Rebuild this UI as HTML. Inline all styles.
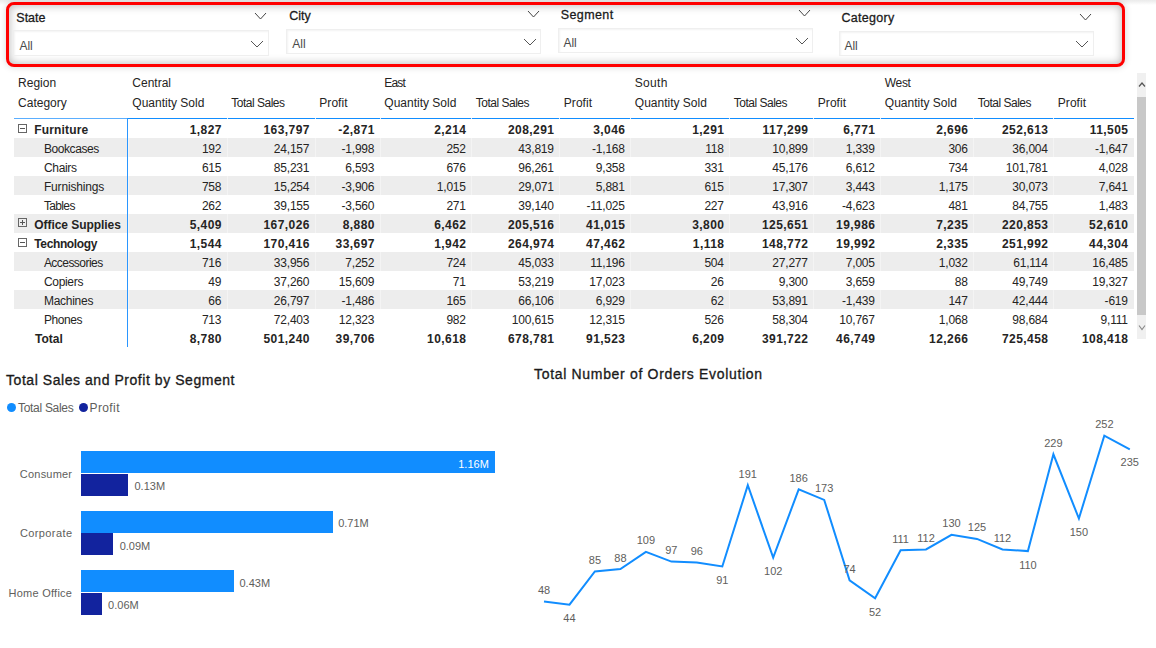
<!DOCTYPE html>
<html><head><meta charset="utf-8">
<style>
*{margin:0;padding:0;box-sizing:border-box}
html,body{width:1156px;height:648px;overflow:hidden;background:#fff}
body{position:relative;font-family:"Liberation Sans",sans-serif;color:#252423}
.abs{position:absolute}
.t{position:absolute;white-space:nowrap;line-height:1}
.topstrip{position:absolute;left:0;top:0;width:1156px;height:5px;background:linear-gradient(#ebebeb,#f2f2f2 40%,rgba(255,255,255,0))}
.slc{position:absolute;left:6px;top:2px;width:1119px;height:64.5px;border:3px solid #ff0000;border-radius:8px;
 box-shadow:0 0 7px rgba(0,0,0,0.17), inset 0 0 10px rgba(0,0,0,0.3);background:#fff}
.sh{font-size:12.5px;color:#1a1a1a;-webkit-text-stroke:0.28px #1a1a1a}
.box{position:absolute;border:1px solid #efefef;background:#fff;box-shadow:inset 1px 1px 2px rgba(0,0,0,0.05)}
.all{font-size:12px;color:#4a4a4a}
.row{position:absolute;left:14px;width:1120px;height:19px}
.g{background:#ededed}
.cell{position:absolute;top:1.5px;height:19px;font-size:12px;line-height:19px;text-align:right;padding-right:5.5px;white-space:nowrap}
.lab{position:absolute;top:1.5px;height:19px;font-size:12px;line-height:19px;white-space:nowrap}
.b{font-weight:bold}
.ttl{font-size:14px;color:#1a1a1a;letter-spacing:0.55px;-webkit-text-stroke:0.32px #1a1a1a}
.hd{position:absolute;font-size:12px;line-height:1;white-space:nowrap;color:#252423}
</style></head><body>
<div class="topstrip"></div>
<div class="slc"></div>

<div class="t sh" style="left:16.3px;top:11.700000000000001px;letter-spacing:0px">State</div>
<svg class="abs" style="left:254px;top:12px" width="13" height="8" viewBox="-1 -1 13 8"><polyline points="0,0 5.5,6 11,0" fill="none" stroke="#444" stroke-width="1.0"/></svg>
<div class="box" style="left:13.2px;top:30.2px;width:255.40000000000003px;height:25.400000000000002px"></div>
<div class="t all" style="left:19.400000000000002px;top:39.9px">All</div>
<svg class="abs" style="left:250px;top:40px" width="14" height="8" viewBox="-1 -1 14 8"><polyline points="0,0 6.0,6 12,0" fill="none" stroke="#555" stroke-width="1.0"/></svg>
<div class="t sh" style="left:289.3px;top:9.799999999999999px;letter-spacing:0px">City</div>
<svg class="abs" style="left:527px;top:10px" width="13" height="8" viewBox="-1 -1 13 8"><polyline points="0,0 5.5,6 11,0" fill="none" stroke="#444" stroke-width="1.0"/></svg>
<div class="box" style="left:286.3px;top:29.3px;width:254.90000000000003px;height:24.7px"></div>
<div class="t all" style="left:292.3px;top:38.0px">All</div>
<svg class="abs" style="left:523px;top:38px" width="14" height="8" viewBox="-1 -1 14 8"><polyline points="0,0 6.0,6 12,0" fill="none" stroke="#555" stroke-width="1.0"/></svg>
<div class="t sh" style="left:560.7px;top:8.9px;letter-spacing:0.4px">Segment</div>
<svg class="abs" style="left:798px;top:9px" width="13" height="8" viewBox="-1 -1 13 8"><polyline points="0,0 5.5,6 11,0" fill="none" stroke="#444" stroke-width="1.0"/></svg>
<div class="box" style="left:558.3px;top:27.6px;width:254.30000000000007px;height:25.0px"></div>
<div class="t all" style="left:563.4px;top:36.8px">All</div>
<svg class="abs" style="left:795px;top:37.2px" width="14" height="8" viewBox="-1 -1 14 8"><polyline points="0,0 6.0,6 12,0" fill="none" stroke="#555" stroke-width="1.0"/></svg>
<div class="t sh" style="left:841.5px;top:11.700000000000001px;letter-spacing:0.3px">Category</div>
<svg class="abs" style="left:1079px;top:12.5px" width="13" height="8" viewBox="-1 -1 13 8"><polyline points="0,0 5.5,6 11,0" fill="none" stroke="#444" stroke-width="1.0"/></svg>
<div class="box" style="left:838.5px;top:30.6px;width:255.5px;height:25.0px"></div>
<div class="t all" style="left:844.4px;top:39.8px">All</div>
<svg class="abs" style="left:1075px;top:39.7px" width="14" height="8" viewBox="-1 -1 14 8"><polyline points="0,0 6.0,6 12,0" fill="none" stroke="#555" stroke-width="1.0"/></svg>
<div class="hd" style="left:18.1px;top:76.8px;letter-spacing:0px">Region</div>
<div class="hd" style="left:18.1px;top:96.7px;letter-spacing:0px">Category</div>
<div class="hd" style="left:132.3px;top:76.8px;letter-spacing:0px">Central</div>
<div class="hd" style="left:132.3px;top:96.7px;letter-spacing:0px">Quantity Sold</div>
<div class="hd" style="left:231.3px;top:96.7px;letter-spacing:-0.5px">Total Sales</div>
<div class="hd" style="left:319.3px;top:96.7px;letter-spacing:0.05px">Profit</div>
<div class="hd" style="left:384.3px;top:76.8px;letter-spacing:-0.8px">East</div>
<div class="hd" style="left:384.3px;top:96.7px;letter-spacing:0px">Quantity Sold</div>
<div class="hd" style="left:475.8px;top:96.7px;letter-spacing:-0.5px">Total Sales</div>
<div class="hd" style="left:563.8px;top:96.7px;letter-spacing:0.05px">Profit</div>
<div class="hd" style="left:634.8px;top:76.8px;letter-spacing:0.3px">South</div>
<div class="hd" style="left:634.8px;top:96.7px;letter-spacing:0px">Quantity Sold</div>
<div class="hd" style="left:733.8px;top:96.7px;letter-spacing:-0.5px">Total Sales</div>
<div class="hd" style="left:817.8px;top:96.7px;letter-spacing:0.05px">Profit</div>
<div class="hd" style="left:884.8px;top:76.8px;letter-spacing:-0.35px">West</div>
<div class="hd" style="left:884.8px;top:96.7px;letter-spacing:0px">Quantity Sold</div>
<div class="hd" style="left:977.8px;top:96.7px;letter-spacing:-0.5px">Total Sales</div>
<div class="hd" style="left:1057.8px;top:96.7px;letter-spacing:0.05px">Profit</div>
<div class="abs" style="left:14px;top:118px;width:113px;height:1px;background:#5aaeff"></div><div class="abs" style="left:127px;top:118px;width:1007px;height:1px;background:#118dff"></div>
<div class="row" style="top:119px">
<div class="lab b" style="left:20.299999999999997px;letter-spacing:0.15px">Furniture</div>
<svg class="abs" style="left:4px;top:5px" width="9" height="9" viewBox="0 0 9 9"><rect x="0.5" y="0.5" width="8" height="8" fill="none" stroke="#666" stroke-width="1"/><line x1="2" y1="4.5" x2="7" y2="4.5" stroke="#555" stroke-width="1"/></svg>
<div class="cell b" style="left:114px;width:99px;letter-spacing:0.45px;padding-right:5.05px">1,827</div>
<div class="cell b" style="left:213px;width:88px;letter-spacing:0.45px;padding-right:5.05px">163,797</div>
<div class="cell b" style="left:301px;width:65px;letter-spacing:0.45px;padding-right:5.05px">-2,871</div>
<div class="cell b" style="left:366px;width:91.5px;letter-spacing:0.45px;padding-right:5.05px">2,214</div>
<div class="cell b" style="left:457.5px;width:88.0px;letter-spacing:0.45px;padding-right:5.05px">208,291</div>
<div class="cell b" style="left:545.5px;width:71.0px;letter-spacing:0.45px;padding-right:5.05px">3,046</div>
<div class="cell b" style="left:616.5px;width:99.0px;letter-spacing:0.45px;padding-right:5.05px">1,291</div>
<div class="cell b" style="left:715.5px;width:84.0px;letter-spacing:0.45px;padding-right:5.05px">117,299</div>
<div class="cell b" style="left:799.5px;width:67.0px;letter-spacing:0.45px;padding-right:5.05px">6,771</div>
<div class="cell b" style="left:866.5px;width:93.0px;letter-spacing:0.45px;padding-right:5.05px">2,696</div>
<div class="cell b" style="left:959.5px;width:80.0px;letter-spacing:0.45px;padding-right:5.05px">252,613</div>
<div class="cell b" style="left:1039.5px;width:80.0px;letter-spacing:0.45px;padding-right:5.05px">11,505</div>
</div>
<div class="row g" style="top:138px">
<div class="lab" style="left:29.9px;letter-spacing:-0.41px">Bookcases</div>
<div class="cell" style="left:114px;width:99px;letter-spacing:-0.2px;padding-right:5.7px">192</div>
<div class="abs" style="left:114px;top:0;width:1px;height:19px;background:#f4f4f4"></div>
<div class="cell" style="left:213px;width:88px;letter-spacing:-0.2px;padding-right:5.7px">24,157</div>
<div class="abs" style="left:213px;top:0;width:1px;height:19px;background:#f4f4f4"></div>
<div class="cell" style="left:301px;width:65px;letter-spacing:-0.2px;padding-right:5.7px">-1,998</div>
<div class="abs" style="left:301px;top:0;width:1px;height:19px;background:#f4f4f4"></div>
<div class="cell" style="left:366px;width:91.5px;letter-spacing:-0.2px;padding-right:5.7px">252</div>
<div class="abs" style="left:366px;top:0;width:1px;height:19px;background:#f4f4f4"></div>
<div class="cell" style="left:457.5px;width:88.0px;letter-spacing:-0.2px;padding-right:5.7px">43,819</div>
<div class="abs" style="left:457px;top:0;width:1px;height:19px;background:#f4f4f4"></div>
<div class="cell" style="left:545.5px;width:71.0px;letter-spacing:-0.2px;padding-right:5.7px">-1,168</div>
<div class="abs" style="left:545px;top:0;width:1px;height:19px;background:#f4f4f4"></div>
<div class="cell" style="left:616.5px;width:99.0px;letter-spacing:-0.2px;padding-right:5.7px">118</div>
<div class="abs" style="left:616px;top:0;width:1px;height:19px;background:#f4f4f4"></div>
<div class="cell" style="left:715.5px;width:84.0px;letter-spacing:-0.2px;padding-right:5.7px">10,899</div>
<div class="abs" style="left:715px;top:0;width:1px;height:19px;background:#f4f4f4"></div>
<div class="cell" style="left:799.5px;width:67.0px;letter-spacing:-0.2px;padding-right:5.7px">1,339</div>
<div class="abs" style="left:799px;top:0;width:1px;height:19px;background:#f4f4f4"></div>
<div class="cell" style="left:866.5px;width:93.0px;letter-spacing:-0.2px;padding-right:5.7px">306</div>
<div class="abs" style="left:866px;top:0;width:1px;height:19px;background:#f4f4f4"></div>
<div class="cell" style="left:959.5px;width:80.0px;letter-spacing:-0.2px;padding-right:5.7px">36,004</div>
<div class="abs" style="left:959px;top:0;width:1px;height:19px;background:#f4f4f4"></div>
<div class="cell" style="left:1039.5px;width:80.0px;letter-spacing:-0.2px;padding-right:5.7px">-1,647</div>
<div class="abs" style="left:1039px;top:0;width:1px;height:19px;background:#f4f4f4"></div>
</div>
<div class="row" style="top:157px">
<div class="lab" style="left:29.9px;letter-spacing:-0.3px">Chairs</div>
<div class="cell" style="left:114px;width:99px;letter-spacing:-0.2px;padding-right:5.7px">615</div>
<div class="cell" style="left:213px;width:88px;letter-spacing:-0.2px;padding-right:5.7px">85,231</div>
<div class="cell" style="left:301px;width:65px;letter-spacing:-0.2px;padding-right:5.7px">6,593</div>
<div class="cell" style="left:366px;width:91.5px;letter-spacing:-0.2px;padding-right:5.7px">676</div>
<div class="cell" style="left:457.5px;width:88.0px;letter-spacing:-0.2px;padding-right:5.7px">96,261</div>
<div class="cell" style="left:545.5px;width:71.0px;letter-spacing:-0.2px;padding-right:5.7px">9,358</div>
<div class="cell" style="left:616.5px;width:99.0px;letter-spacing:-0.2px;padding-right:5.7px">331</div>
<div class="cell" style="left:715.5px;width:84.0px;letter-spacing:-0.2px;padding-right:5.7px">45,176</div>
<div class="cell" style="left:799.5px;width:67.0px;letter-spacing:-0.2px;padding-right:5.7px">6,612</div>
<div class="cell" style="left:866.5px;width:93.0px;letter-spacing:-0.2px;padding-right:5.7px">734</div>
<div class="cell" style="left:959.5px;width:80.0px;letter-spacing:-0.2px;padding-right:5.7px">101,781</div>
<div class="cell" style="left:1039.5px;width:80.0px;letter-spacing:-0.2px;padding-right:5.7px">4,028</div>
</div>
<div class="row g" style="top:176px">
<div class="lab" style="left:29.9px;letter-spacing:-0.16px">Furnishings</div>
<div class="cell" style="left:114px;width:99px;letter-spacing:-0.2px;padding-right:5.7px">758</div>
<div class="abs" style="left:114px;top:0;width:1px;height:19px;background:#f4f4f4"></div>
<div class="cell" style="left:213px;width:88px;letter-spacing:-0.2px;padding-right:5.7px">15,254</div>
<div class="abs" style="left:213px;top:0;width:1px;height:19px;background:#f4f4f4"></div>
<div class="cell" style="left:301px;width:65px;letter-spacing:-0.2px;padding-right:5.7px">-3,906</div>
<div class="abs" style="left:301px;top:0;width:1px;height:19px;background:#f4f4f4"></div>
<div class="cell" style="left:366px;width:91.5px;letter-spacing:-0.2px;padding-right:5.7px">1,015</div>
<div class="abs" style="left:366px;top:0;width:1px;height:19px;background:#f4f4f4"></div>
<div class="cell" style="left:457.5px;width:88.0px;letter-spacing:-0.2px;padding-right:5.7px">29,071</div>
<div class="abs" style="left:457px;top:0;width:1px;height:19px;background:#f4f4f4"></div>
<div class="cell" style="left:545.5px;width:71.0px;letter-spacing:-0.2px;padding-right:5.7px">5,881</div>
<div class="abs" style="left:545px;top:0;width:1px;height:19px;background:#f4f4f4"></div>
<div class="cell" style="left:616.5px;width:99.0px;letter-spacing:-0.2px;padding-right:5.7px">615</div>
<div class="abs" style="left:616px;top:0;width:1px;height:19px;background:#f4f4f4"></div>
<div class="cell" style="left:715.5px;width:84.0px;letter-spacing:-0.2px;padding-right:5.7px">17,307</div>
<div class="abs" style="left:715px;top:0;width:1px;height:19px;background:#f4f4f4"></div>
<div class="cell" style="left:799.5px;width:67.0px;letter-spacing:-0.2px;padding-right:5.7px">3,443</div>
<div class="abs" style="left:799px;top:0;width:1px;height:19px;background:#f4f4f4"></div>
<div class="cell" style="left:866.5px;width:93.0px;letter-spacing:-0.2px;padding-right:5.7px">1,175</div>
<div class="abs" style="left:866px;top:0;width:1px;height:19px;background:#f4f4f4"></div>
<div class="cell" style="left:959.5px;width:80.0px;letter-spacing:-0.2px;padding-right:5.7px">30,073</div>
<div class="abs" style="left:959px;top:0;width:1px;height:19px;background:#f4f4f4"></div>
<div class="cell" style="left:1039.5px;width:80.0px;letter-spacing:-0.2px;padding-right:5.7px">7,641</div>
<div class="abs" style="left:1039px;top:0;width:1px;height:19px;background:#f4f4f4"></div>
</div>
<div class="row" style="top:195px">
<div class="lab" style="left:29.9px;letter-spacing:-0.64px">Tables</div>
<div class="cell" style="left:114px;width:99px;letter-spacing:-0.2px;padding-right:5.7px">262</div>
<div class="cell" style="left:213px;width:88px;letter-spacing:-0.2px;padding-right:5.7px">39,155</div>
<div class="cell" style="left:301px;width:65px;letter-spacing:-0.2px;padding-right:5.7px">-3,560</div>
<div class="cell" style="left:366px;width:91.5px;letter-spacing:-0.2px;padding-right:5.7px">271</div>
<div class="cell" style="left:457.5px;width:88.0px;letter-spacing:-0.2px;padding-right:5.7px">39,140</div>
<div class="cell" style="left:545.5px;width:71.0px;letter-spacing:-0.2px;padding-right:5.7px">-11,025</div>
<div class="cell" style="left:616.5px;width:99.0px;letter-spacing:-0.2px;padding-right:5.7px">227</div>
<div class="cell" style="left:715.5px;width:84.0px;letter-spacing:-0.2px;padding-right:5.7px">43,916</div>
<div class="cell" style="left:799.5px;width:67.0px;letter-spacing:-0.2px;padding-right:5.7px">-4,623</div>
<div class="cell" style="left:866.5px;width:93.0px;letter-spacing:-0.2px;padding-right:5.7px">481</div>
<div class="cell" style="left:959.5px;width:80.0px;letter-spacing:-0.2px;padding-right:5.7px">84,755</div>
<div class="cell" style="left:1039.5px;width:80.0px;letter-spacing:-0.2px;padding-right:5.7px">1,483</div>
</div>
<div class="row g" style="top:214px">
<div class="lab b" style="left:20.299999999999997px;letter-spacing:-0.06px">Office Supplies</div>
<svg class="abs" style="left:4px;top:4px" width="9" height="9" viewBox="0 0 9 9"><rect x="0.5" y="0.5" width="8" height="8" fill="none" stroke="#666" stroke-width="1"/><line x1="2" y1="4.5" x2="7" y2="4.5" stroke="#555" stroke-width="1"/><line x1="4.5" y1="2" x2="4.5" y2="7" stroke="#555" stroke-width="1"/></svg>
<div class="cell b" style="left:114px;width:99px;letter-spacing:0.45px;padding-right:5.05px">5,409</div>
<div class="abs" style="left:114px;top:0;width:1px;height:19px;background:#f4f4f4"></div>
<div class="cell b" style="left:213px;width:88px;letter-spacing:0.45px;padding-right:5.05px">167,026</div>
<div class="abs" style="left:213px;top:0;width:1px;height:19px;background:#f4f4f4"></div>
<div class="cell b" style="left:301px;width:65px;letter-spacing:0.45px;padding-right:5.05px">8,880</div>
<div class="abs" style="left:301px;top:0;width:1px;height:19px;background:#f4f4f4"></div>
<div class="cell b" style="left:366px;width:91.5px;letter-spacing:0.45px;padding-right:5.05px">6,462</div>
<div class="abs" style="left:366px;top:0;width:1px;height:19px;background:#f4f4f4"></div>
<div class="cell b" style="left:457.5px;width:88.0px;letter-spacing:0.45px;padding-right:5.05px">205,516</div>
<div class="abs" style="left:457px;top:0;width:1px;height:19px;background:#f4f4f4"></div>
<div class="cell b" style="left:545.5px;width:71.0px;letter-spacing:0.45px;padding-right:5.05px">41,015</div>
<div class="abs" style="left:545px;top:0;width:1px;height:19px;background:#f4f4f4"></div>
<div class="cell b" style="left:616.5px;width:99.0px;letter-spacing:0.45px;padding-right:5.05px">3,800</div>
<div class="abs" style="left:616px;top:0;width:1px;height:19px;background:#f4f4f4"></div>
<div class="cell b" style="left:715.5px;width:84.0px;letter-spacing:0.45px;padding-right:5.05px">125,651</div>
<div class="abs" style="left:715px;top:0;width:1px;height:19px;background:#f4f4f4"></div>
<div class="cell b" style="left:799.5px;width:67.0px;letter-spacing:0.45px;padding-right:5.05px">19,986</div>
<div class="abs" style="left:799px;top:0;width:1px;height:19px;background:#f4f4f4"></div>
<div class="cell b" style="left:866.5px;width:93.0px;letter-spacing:0.45px;padding-right:5.05px">7,235</div>
<div class="abs" style="left:866px;top:0;width:1px;height:19px;background:#f4f4f4"></div>
<div class="cell b" style="left:959.5px;width:80.0px;letter-spacing:0.45px;padding-right:5.05px">220,853</div>
<div class="abs" style="left:959px;top:0;width:1px;height:19px;background:#f4f4f4"></div>
<div class="cell b" style="left:1039.5px;width:80.0px;letter-spacing:0.45px;padding-right:5.05px">52,610</div>
<div class="abs" style="left:1039px;top:0;width:1px;height:19px;background:#f4f4f4"></div>
</div>
<div class="row" style="top:233px">
<div class="lab b" style="left:20.299999999999997px;letter-spacing:-0.38px">Technology</div>
<svg class="abs" style="left:4px;top:5px" width="9" height="9" viewBox="0 0 9 9"><rect x="0.5" y="0.5" width="8" height="8" fill="none" stroke="#666" stroke-width="1"/><line x1="2" y1="4.5" x2="7" y2="4.5" stroke="#555" stroke-width="1"/></svg>
<div class="cell b" style="left:114px;width:99px;letter-spacing:0.45px;padding-right:5.05px">1,544</div>
<div class="cell b" style="left:213px;width:88px;letter-spacing:0.45px;padding-right:5.05px">170,416</div>
<div class="cell b" style="left:301px;width:65px;letter-spacing:0.45px;padding-right:5.05px">33,697</div>
<div class="cell b" style="left:366px;width:91.5px;letter-spacing:0.45px;padding-right:5.05px">1,942</div>
<div class="cell b" style="left:457.5px;width:88.0px;letter-spacing:0.45px;padding-right:5.05px">264,974</div>
<div class="cell b" style="left:545.5px;width:71.0px;letter-spacing:0.45px;padding-right:5.05px">47,462</div>
<div class="cell b" style="left:616.5px;width:99.0px;letter-spacing:0.45px;padding-right:5.05px">1,118</div>
<div class="cell b" style="left:715.5px;width:84.0px;letter-spacing:0.45px;padding-right:5.05px">148,772</div>
<div class="cell b" style="left:799.5px;width:67.0px;letter-spacing:0.45px;padding-right:5.05px">19,992</div>
<div class="cell b" style="left:866.5px;width:93.0px;letter-spacing:0.45px;padding-right:5.05px">2,335</div>
<div class="cell b" style="left:959.5px;width:80.0px;letter-spacing:0.45px;padding-right:5.05px">251,992</div>
<div class="cell b" style="left:1039.5px;width:80.0px;letter-spacing:0.45px;padding-right:5.05px">44,304</div>
</div>
<div class="row g" style="top:252px">
<div class="lab" style="left:29.9px;letter-spacing:-0.54px">Accessories</div>
<div class="cell" style="left:114px;width:99px;letter-spacing:-0.2px;padding-right:5.7px">716</div>
<div class="abs" style="left:114px;top:0;width:1px;height:19px;background:#f4f4f4"></div>
<div class="cell" style="left:213px;width:88px;letter-spacing:-0.2px;padding-right:5.7px">33,956</div>
<div class="abs" style="left:213px;top:0;width:1px;height:19px;background:#f4f4f4"></div>
<div class="cell" style="left:301px;width:65px;letter-spacing:-0.2px;padding-right:5.7px">7,252</div>
<div class="abs" style="left:301px;top:0;width:1px;height:19px;background:#f4f4f4"></div>
<div class="cell" style="left:366px;width:91.5px;letter-spacing:-0.2px;padding-right:5.7px">724</div>
<div class="abs" style="left:366px;top:0;width:1px;height:19px;background:#f4f4f4"></div>
<div class="cell" style="left:457.5px;width:88.0px;letter-spacing:-0.2px;padding-right:5.7px">45,033</div>
<div class="abs" style="left:457px;top:0;width:1px;height:19px;background:#f4f4f4"></div>
<div class="cell" style="left:545.5px;width:71.0px;letter-spacing:-0.2px;padding-right:5.7px">11,196</div>
<div class="abs" style="left:545px;top:0;width:1px;height:19px;background:#f4f4f4"></div>
<div class="cell" style="left:616.5px;width:99.0px;letter-spacing:-0.2px;padding-right:5.7px">504</div>
<div class="abs" style="left:616px;top:0;width:1px;height:19px;background:#f4f4f4"></div>
<div class="cell" style="left:715.5px;width:84.0px;letter-spacing:-0.2px;padding-right:5.7px">27,277</div>
<div class="abs" style="left:715px;top:0;width:1px;height:19px;background:#f4f4f4"></div>
<div class="cell" style="left:799.5px;width:67.0px;letter-spacing:-0.2px;padding-right:5.7px">7,005</div>
<div class="abs" style="left:799px;top:0;width:1px;height:19px;background:#f4f4f4"></div>
<div class="cell" style="left:866.5px;width:93.0px;letter-spacing:-0.2px;padding-right:5.7px">1,032</div>
<div class="abs" style="left:866px;top:0;width:1px;height:19px;background:#f4f4f4"></div>
<div class="cell" style="left:959.5px;width:80.0px;letter-spacing:-0.2px;padding-right:5.7px">61,114</div>
<div class="abs" style="left:959px;top:0;width:1px;height:19px;background:#f4f4f4"></div>
<div class="cell" style="left:1039.5px;width:80.0px;letter-spacing:-0.2px;padding-right:5.7px">16,485</div>
<div class="abs" style="left:1039px;top:0;width:1px;height:19px;background:#f4f4f4"></div>
</div>
<div class="row" style="top:271px">
<div class="lab" style="left:29.9px;letter-spacing:-0.3px">Copiers</div>
<div class="cell" style="left:114px;width:99px;letter-spacing:-0.2px;padding-right:5.7px">49</div>
<div class="cell" style="left:213px;width:88px;letter-spacing:-0.2px;padding-right:5.7px">37,260</div>
<div class="cell" style="left:301px;width:65px;letter-spacing:-0.2px;padding-right:5.7px">15,609</div>
<div class="cell" style="left:366px;width:91.5px;letter-spacing:-0.2px;padding-right:5.7px">71</div>
<div class="cell" style="left:457.5px;width:88.0px;letter-spacing:-0.2px;padding-right:5.7px">53,219</div>
<div class="cell" style="left:545.5px;width:71.0px;letter-spacing:-0.2px;padding-right:5.7px">17,023</div>
<div class="cell" style="left:616.5px;width:99.0px;letter-spacing:-0.2px;padding-right:5.7px">26</div>
<div class="cell" style="left:715.5px;width:84.0px;letter-spacing:-0.2px;padding-right:5.7px">9,300</div>
<div class="cell" style="left:799.5px;width:67.0px;letter-spacing:-0.2px;padding-right:5.7px">3,659</div>
<div class="cell" style="left:866.5px;width:93.0px;letter-spacing:-0.2px;padding-right:5.7px">88</div>
<div class="cell" style="left:959.5px;width:80.0px;letter-spacing:-0.2px;padding-right:5.7px">49,749</div>
<div class="cell" style="left:1039.5px;width:80.0px;letter-spacing:-0.2px;padding-right:5.7px">19,327</div>
</div>
<div class="row g" style="top:290px">
<div class="lab" style="left:29.9px;letter-spacing:-0.26px">Machines</div>
<div class="cell" style="left:114px;width:99px;letter-spacing:-0.2px;padding-right:5.7px">66</div>
<div class="abs" style="left:114px;top:0;width:1px;height:19px;background:#f4f4f4"></div>
<div class="cell" style="left:213px;width:88px;letter-spacing:-0.2px;padding-right:5.7px">26,797</div>
<div class="abs" style="left:213px;top:0;width:1px;height:19px;background:#f4f4f4"></div>
<div class="cell" style="left:301px;width:65px;letter-spacing:-0.2px;padding-right:5.7px">-1,486</div>
<div class="abs" style="left:301px;top:0;width:1px;height:19px;background:#f4f4f4"></div>
<div class="cell" style="left:366px;width:91.5px;letter-spacing:-0.2px;padding-right:5.7px">165</div>
<div class="abs" style="left:366px;top:0;width:1px;height:19px;background:#f4f4f4"></div>
<div class="cell" style="left:457.5px;width:88.0px;letter-spacing:-0.2px;padding-right:5.7px">66,106</div>
<div class="abs" style="left:457px;top:0;width:1px;height:19px;background:#f4f4f4"></div>
<div class="cell" style="left:545.5px;width:71.0px;letter-spacing:-0.2px;padding-right:5.7px">6,929</div>
<div class="abs" style="left:545px;top:0;width:1px;height:19px;background:#f4f4f4"></div>
<div class="cell" style="left:616.5px;width:99.0px;letter-spacing:-0.2px;padding-right:5.7px">62</div>
<div class="abs" style="left:616px;top:0;width:1px;height:19px;background:#f4f4f4"></div>
<div class="cell" style="left:715.5px;width:84.0px;letter-spacing:-0.2px;padding-right:5.7px">53,891</div>
<div class="abs" style="left:715px;top:0;width:1px;height:19px;background:#f4f4f4"></div>
<div class="cell" style="left:799.5px;width:67.0px;letter-spacing:-0.2px;padding-right:5.7px">-1,439</div>
<div class="abs" style="left:799px;top:0;width:1px;height:19px;background:#f4f4f4"></div>
<div class="cell" style="left:866.5px;width:93.0px;letter-spacing:-0.2px;padding-right:5.7px">147</div>
<div class="abs" style="left:866px;top:0;width:1px;height:19px;background:#f4f4f4"></div>
<div class="cell" style="left:959.5px;width:80.0px;letter-spacing:-0.2px;padding-right:5.7px">42,444</div>
<div class="abs" style="left:959px;top:0;width:1px;height:19px;background:#f4f4f4"></div>
<div class="cell" style="left:1039.5px;width:80.0px;letter-spacing:-0.2px;padding-right:5.7px">-619</div>
<div class="abs" style="left:1039px;top:0;width:1px;height:19px;background:#f4f4f4"></div>
</div>
<div class="row" style="top:309px">
<div class="lab" style="left:29.9px;letter-spacing:-0.4px">Phones</div>
<div class="cell" style="left:114px;width:99px;letter-spacing:-0.2px;padding-right:5.7px">713</div>
<div class="cell" style="left:213px;width:88px;letter-spacing:-0.2px;padding-right:5.7px">72,403</div>
<div class="cell" style="left:301px;width:65px;letter-spacing:-0.2px;padding-right:5.7px">12,323</div>
<div class="cell" style="left:366px;width:91.5px;letter-spacing:-0.2px;padding-right:5.7px">982</div>
<div class="cell" style="left:457.5px;width:88.0px;letter-spacing:-0.2px;padding-right:5.7px">100,615</div>
<div class="cell" style="left:545.5px;width:71.0px;letter-spacing:-0.2px;padding-right:5.7px">12,315</div>
<div class="cell" style="left:616.5px;width:99.0px;letter-spacing:-0.2px;padding-right:5.7px">526</div>
<div class="cell" style="left:715.5px;width:84.0px;letter-spacing:-0.2px;padding-right:5.7px">58,304</div>
<div class="cell" style="left:799.5px;width:67.0px;letter-spacing:-0.2px;padding-right:5.7px">10,767</div>
<div class="cell" style="left:866.5px;width:93.0px;letter-spacing:-0.2px;padding-right:5.7px">1,068</div>
<div class="cell" style="left:959.5px;width:80.0px;letter-spacing:-0.2px;padding-right:5.7px">98,684</div>
<div class="cell" style="left:1039.5px;width:80.0px;letter-spacing:-0.2px;padding-right:5.7px">9,111</div>
</div>
<div class="row" style="top:328px">
<div class="lab b" style="left:21.1px">Total</div>
<div class="cell b" style="left:114px;width:99px;letter-spacing:0.45px;padding-right:5.05px">8,780</div>
<div class="cell b" style="left:213px;width:88px;letter-spacing:0.45px;padding-right:5.05px">501,240</div>
<div class="cell b" style="left:301px;width:65px;letter-spacing:0.45px;padding-right:5.05px">39,706</div>
<div class="cell b" style="left:366px;width:91.5px;letter-spacing:0.45px;padding-right:5.05px">10,618</div>
<div class="cell b" style="left:457.5px;width:88.0px;letter-spacing:0.45px;padding-right:5.05px">678,781</div>
<div class="cell b" style="left:545.5px;width:71.0px;letter-spacing:0.45px;padding-right:5.05px">91,523</div>
<div class="cell b" style="left:616.5px;width:99.0px;letter-spacing:0.45px;padding-right:5.05px">6,209</div>
<div class="cell b" style="left:715.5px;width:84.0px;letter-spacing:0.45px;padding-right:5.05px">391,722</div>
<div class="cell b" style="left:799.5px;width:67.0px;letter-spacing:0.45px;padding-right:5.05px">46,749</div>
<div class="cell b" style="left:866.5px;width:93.0px;letter-spacing:0.45px;padding-right:5.05px">12,266</div>
<div class="cell b" style="left:959.5px;width:80.0px;letter-spacing:0.45px;padding-right:5.05px">725,458</div>
<div class="cell b" style="left:1039.5px;width:80.0px;letter-spacing:0.45px;padding-right:5.05px">108,418</div>
</div>
<div class="abs" style="left:127px;top:118px;width:1px;height:229px;background:#2a96ff"></div>
<div class="abs" style="left:227px;top:118px;width:1px;height:1px;background:#d8ebff"></div>
<div class="abs" style="left:315px;top:118px;width:1px;height:1px;background:#d8ebff"></div>
<div class="abs" style="left:380px;top:118px;width:1px;height:1px;background:#d8ebff"></div>
<div class="abs" style="left:471px;top:118px;width:1px;height:1px;background:#d8ebff"></div>
<div class="abs" style="left:559px;top:118px;width:1px;height:1px;background:#d8ebff"></div>
<div class="abs" style="left:630px;top:118px;width:1px;height:1px;background:#d8ebff"></div>
<div class="abs" style="left:729px;top:118px;width:1px;height:1px;background:#d8ebff"></div>
<div class="abs" style="left:813px;top:118px;width:1px;height:1px;background:#d8ebff"></div>
<div class="abs" style="left:880px;top:118px;width:1px;height:1px;background:#d8ebff"></div>
<div class="abs" style="left:973px;top:118px;width:1px;height:1px;background:#d8ebff"></div>
<div class="abs" style="left:1053px;top:118px;width:1px;height:1px;background:#d8ebff"></div>
<div class="abs" style="left:1137px;top:72.5px;width:9px;height:266.5px;background:#f0f0f0"></div>
<div class="abs" style="left:1137px;top:97px;width:9px;height:217.5px;background:#c8c8c8"></div>
<svg class="abs" style="left:1136px;top:79px" width="12" height="12"><polyline points="3,7.5 6,4 9,7.5" fill="none" stroke="#555" stroke-width="1.2"/></svg>
<svg class="abs" style="left:1136px;top:322px" width="12" height="12"><polyline points="3,3.5 6,7.5 9,3.5" fill="none" stroke="#888" stroke-width="1.1"/></svg>
<div class="t ttl" style="left:6px;top:372.9px">Total Sales and Profit by Segment</div>
<div class="abs" style="left:7.2px;top:403.2px;width:9px;height:9px;border-radius:50%;background:#118dff"></div>
<div class="t" style="left:18px;top:402px;font-size:12px;letter-spacing:-0.3px;color:#605e5c">Total Sales</div>
<div class="abs" style="left:78.6px;top:403.2px;width:9px;height:9px;border-radius:50%;background:#12239e"></div>
<div class="t" style="left:89.5px;top:402px;font-size:12px;letter-spacing:0.4px;color:#605e5c">Profit</div>
<div class="abs" style="left:80.6px;top:450.9px;width:414.5px;height:22.200000000000045px;background:#118dff"></div>
<div class="abs" style="left:80.6px;top:473.70000000000005px;width:47.70000000000002px;height:21.999999999999964px;background:#12239e"></div>
<div class="t" style="right:1083.8px;top:468.50000000000006px;font-size:11px;letter-spacing:0.2px;color:#605e5c">Consumer</div>
<div class="t" style="right:667.2px;top:458.5px;font-size:11px;color:#fff">1.16M</div>
<div class="t" style="left:134.5px;top:481.09999999999997px;font-size:11px;color:#605e5c">0.13M</div>
<div class="abs" style="left:80.6px;top:510.5px;width:252.1px;height:22.200000000000045px;background:#118dff"></div>
<div class="abs" style="left:80.6px;top:533.3000000000001px;width:32.900000000000006px;height:22.09999999999993px;background:#12239e"></div>
<div class="t" style="right:1083.6px;top:528.1px;font-size:11px;letter-spacing:0.4px;color:#605e5c">Corporate</div>
<div class="t" style="left:338.2px;top:518.1px;font-size:11px;color:#605e5c">0.71M</div>
<div class="t" style="left:119.7px;top:540.7499999999999px;font-size:11px;color:#605e5c">0.09M</div>
<div class="abs" style="left:80.6px;top:570.1px;width:153.4px;height:22.299999999999955px;background:#118dff"></div>
<div class="abs" style="left:80.6px;top:593.0px;width:21.30000000000001px;height:22.100000000000044px;background:#12239e"></div>
<div class="t" style="right:1083.75px;top:587.8px;font-size:11px;letter-spacing:0.25px;color:#605e5c">Home Office</div>
<div class="t" style="left:239.5px;top:577.75px;font-size:11px;color:#605e5c">0.43M</div>
<div class="t" style="left:108.10000000000001px;top:600.4499999999999px;font-size:11px;color:#605e5c">0.06M</div>
<div class="t ttl" style="letter-spacing:0.68px;left:534px;top:367.0px">Total Number of Orders Evolution</div>
<svg class="abs" style="left:0;top:0" width="1156" height="648"><polyline fill="none" stroke="#118dff" stroke-width="2" stroke-linejoin="miter" points="544.0,601.5 569.5,604.7 594.9,571.4 620.4,569.0 645.9,551.9 671.4,561.6 696.8,562.5 722.3,566.5 747.8,485.2 773.2,557.6 798.7,489.3 824.2,499.9 849.6,580.3 875.1,598.2 900.6,550.3 926.0,549.4 951.5,534.8 977.0,538.9 1002.5,549.4 1027.9,551.1 1053.4,454.3 1078.9,518.5 1104.3,435.6 1129.8,449.4"/></svg>
<div class="t" style="left:514.0px;width:60px;text-align:center;top:585.0759999999999px;font-size:11px;color:#605e5c">48</div>
<div class="t" style="left:539.47px;width:60px;text-align:center;top:613.3279999999999px;font-size:11px;color:#605e5c">44</div>
<div class="t" style="left:564.94px;width:60px;text-align:center;top:554.9949999999999px;font-size:11px;color:#605e5c">85</div>
<div class="t" style="left:590.41px;width:60px;text-align:center;top:552.5559999999999px;font-size:11px;color:#605e5c">88</div>
<div class="t" style="left:615.88px;width:60px;text-align:center;top:535.483px;font-size:11px;color:#605e5c">109</div>
<div class="t" style="left:641.35px;width:60px;text-align:center;top:545.2389999999999px;font-size:11px;color:#605e5c">97</div>
<div class="t" style="left:666.8199999999999px;width:60px;text-align:center;top:546.0519999999999px;font-size:11px;color:#605e5c">96</div>
<div class="t" style="left:692.29px;width:60px;text-align:center;top:575.117px;font-size:11px;color:#605e5c">91</div>
<div class="t" style="left:717.76px;width:60px;text-align:center;top:468.817px;font-size:11px;color:#605e5c">191</div>
<div class="t" style="left:743.23px;width:60px;text-align:center;top:566.174px;font-size:11px;color:#605e5c">102</div>
<div class="t" style="left:768.7px;width:60px;text-align:center;top:472.88200000000006px;font-size:11px;color:#605e5c">186</div>
<div class="t" style="left:794.17px;width:60px;text-align:center;top:483.451px;font-size:11px;color:#605e5c">173</div>
<div class="t" style="left:819.64px;width:60px;text-align:center;top:563.9379999999999px;font-size:11px;color:#605e5c">74</div>
<div class="t" style="left:845.11px;width:60px;text-align:center;top:606.824px;font-size:11px;color:#605e5c">52</div>
<div class="t" style="left:870.5799999999999px;width:60px;text-align:center;top:533.857px;font-size:11px;color:#605e5c">111</div>
<div class="t" style="left:896.05px;width:60px;text-align:center;top:533.0439999999999px;font-size:11px;color:#605e5c">112</div>
<div class="t" style="left:921.52px;width:60px;text-align:center;top:518.4099999999999px;font-size:11px;color:#605e5c">130</div>
<div class="t" style="left:946.99px;width:60px;text-align:center;top:522.4749999999999px;font-size:11px;color:#605e5c">125</div>
<div class="t" style="left:972.46px;width:60px;text-align:center;top:533.0439999999999px;font-size:11px;color:#605e5c">112</div>
<div class="t" style="left:997.9299999999998px;width:60px;text-align:center;top:559.67px;font-size:11px;color:#605e5c">110</div>
<div class="t" style="left:1023.4000000000001px;width:60px;text-align:center;top:437.923px;font-size:11px;color:#605e5c">229</div>
<div class="t" style="left:1048.87px;width:60px;text-align:center;top:527.1499999999999px;font-size:11px;color:#605e5c">150</div>
<div class="t" style="left:1074.34px;width:60px;text-align:center;top:419.22400000000005px;font-size:11px;color:#605e5c">252</div>
<div class="t" style="left:1099.81px;width:60px;text-align:center;top:457.24500000000006px;font-size:11px;color:#605e5c">235</div>
</body></html>
